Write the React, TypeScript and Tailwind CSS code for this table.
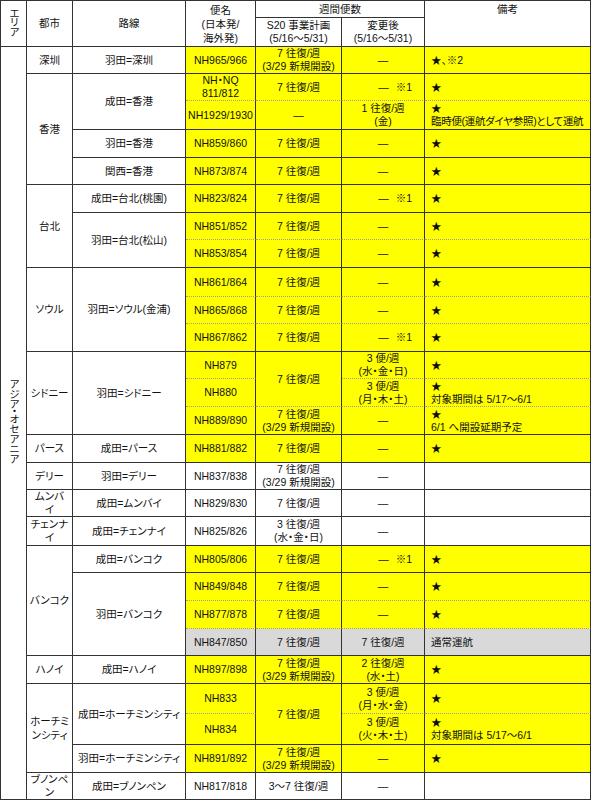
import React from 'react'
import clsx from 'clsx'

type Bg = 'y' | 'w' | 'g'

const bgClass: Record<Bg, string> = {
  y: 'bg-[#ffff00]',
  w: 'bg-white',
  g: 'bg-[#d9d9d9]',
}

type TdProps = {
  bg?: Bg
  dot?: boolean
  rs?: number
  cs?: number
  left?: boolean
  className?: string
  children?: React.ReactNode
}

function Td({ bg = 'w', dot = false, rs, cs, left = false, className, children }: TdProps) {
  return (
    <td
      rowSpan={rs}
      colSpan={cs}
      className={clsx(
        'border-r border-b border-r-[#333] p-0 align-middle',
        dot ? 'border-b-[#9c9c9c] [border-bottom-style:dotted]' : 'border-b-[#333]',
        left ? 'pl-[6px] text-left' : 'text-center',
        bgClass[bg],
        className,
      )}
    >
      {children}
    </td>
  )
}

function Two({ a, b }: { a: string; b: string }) {
  return (
    <div className="leading-[13px]">
      <div>{a}</div>
      <div>{b}</div>
    </div>
  )
}

function Dash() {
  return <span>—</span>
}

function DashNote() {
  return (
    <div className="flex justify-end gap-[7px] pr-[12px]">
      <span>—</span>
      <span>※1</span>
    </div>
  )
}

function Note({ a, b, className }: { a: string; b: string; className?: string }) {
  return (
    <div className={clsx('leading-[13px]', className)}>
      <div>{a}</div>
      <div>{b}</div>
    </div>
  )
}

const W7 = '7 往復/週'
const NEW = '(3/29 新規開設)'

export default function App() {
  return (
    <div className="h-[800px] w-[591px] overflow-hidden bg-white text-[#111]">
      <table className="w-[591px] table-fixed border-separate border-spacing-0 border-l border-t border-[#333] font-['Liberation_Sans','Noto_Sans_CJK_JP',sans-serif] text-[10.5px] leading-[13px] [font-feature-settings:'palt']">
        <colgroup>
          <col className="w-[26px]" />
          <col className="w-[46px]" />
          <col className="w-[113px]" />
          <col className="w-[70px]" />
          <col className="w-[86px]" />
          <col className="w-[83px]" />
          <col className="w-[166px]" />
        </colgroup>
        <thead>
          {/* Header */}
          <tr className="h-[17px]">
            <Td rs={2}>
              <div className="mx-auto inline-block [writing-mode:vertical-rl] [font-feature-settings:'vpal']">
                エリア
              </div>
            </Td>
            <Td rs={2}>都市</Td>
            <Td rs={2}>路線</Td>
            <Td rs={2}>
              <div className="leading-[14px]">
                <div>便名</div>
                <div>(日本発/</div>
                <div>海外発)</div>
              </div>
            </Td>
            <Td cs={2}>週間便数</Td>
            <Td rs={2} className="!align-top pt-[2px]">
              備考
            </Td>
          </tr>
          <tr className="h-[29px]">
            <Td>
              <Two a="S20 事業計画" b="(5/16〜5/31)" />
            </Td>
            <Td>
              <Two a="変更後" b="(5/16〜5/31)" />
            </Td>
          </tr>
        </thead>
        <tbody>
          <tr className="h-[27px]">
            <Td rs={27}>
              <div className="mx-auto inline-block [writing-mode:vertical-rl] [font-feature-settings:'vpal']">
                アジア・オセアニア
              </div>
            </Td>
            <Td>深圳</Td>
            <Td>羽田=深圳</Td>
            <Td bg="y">NH965/966</Td>
            <Td bg="y">
              <Two a={W7} b={NEW} />
            </Td>
            <Td bg="y">
              <Dash />
            </Td>
            <Td bg="y" left>
              ★、※2
            </Td>
          </tr>

          {/* 香港 */}
          <tr className="h-[27px]">
            <Td rs={4}>香港</Td>
            <Td rs={2}>成田=香港</Td>
            <Td bg="y" dot>
              <div className="leading-[13px]">
                <div>NH・NQ</div>
                <div>811/812</div>
              </div>
            </Td>
            <Td bg="y" dot>
              {W7}
            </Td>
            <Td bg="y" dot>
              <DashNote />
            </Td>
            <Td bg="y" dot left>
              ★
            </Td>
          </tr>
          <tr className="h-[29px]">
            <Td bg="y">NH1929/1930</Td>
            <Td bg="y">
              <Dash />
            </Td>
            <Td bg="y">
              <Two a="1 往復/週" b="(金)" />
            </Td>
            <Td bg="y" left>
              <Note a="★" b="臨時便(運航ダイヤ参照)として運航" className="tracking-[-0.3px]" />
            </Td>
          </tr>
          <tr className="h-[28px]">
            <Td>羽田=香港</Td>
            <Td bg="y">NH859/860</Td>
            <Td bg="y">{W7}</Td>
            <Td bg="y">
              <Dash />
            </Td>
            <Td bg="y" left>
              ★
            </Td>
          </tr>
          <tr className="h-[27px]">
            <Td>関西=香港</Td>
            <Td bg="y">NH873/874</Td>
            <Td bg="y">{W7}</Td>
            <Td bg="y">
              <Dash />
            </Td>
            <Td bg="y" left>
              ★
            </Td>
          </tr>

          {/* 台北 */}
          <tr className="h-[28px]">
            <Td rs={3}>台北</Td>
            <Td>成田=台北(桃園)</Td>
            <Td bg="y">NH823/824</Td>
            <Td bg="y">{W7}</Td>
            <Td bg="y">
              <DashNote />
            </Td>
            <Td bg="y" left>
              ★
            </Td>
          </tr>
          <tr className="h-[27px]">
            <Td rs={2}>羽田=台北(松山)</Td>
            <Td bg="y" dot>
              NH851/852
            </Td>
            <Td bg="y" dot>
              {W7}
            </Td>
            <Td bg="y" dot>
              <Dash />
            </Td>
            <Td bg="y" dot left>
              ★
            </Td>
          </tr>
          <tr className="h-[28px]">
            <Td bg="y">NH853/854</Td>
            <Td bg="y">{W7}</Td>
            <Td bg="y">
              <Dash />
            </Td>
            <Td bg="y" left>
              ★
            </Td>
          </tr>

          {/* ソウル */}
          <tr className="h-[29px]">
            <Td rs={3}>ソウル</Td>
            <Td rs={3}>羽田=ソウル(金浦)</Td>
            <Td bg="y" dot>
              NH861/864
            </Td>
            <Td bg="y" dot>
              {W7}
            </Td>
            <Td bg="y" dot>
              <Dash />
            </Td>
            <Td bg="y" dot left>
              ★
            </Td>
          </tr>
          <tr className="h-[27px]">
            <Td bg="y" dot>
              NH865/868
            </Td>
            <Td bg="y" dot>
              {W7}
            </Td>
            <Td bg="y" dot>
              <Dash />
            </Td>
            <Td bg="y" dot left>
              ★
            </Td>
          </tr>
          <tr className="h-[28px]">
            <Td bg="y">NH867/862</Td>
            <Td bg="y">{W7}</Td>
            <Td bg="y">
              <DashNote />
            </Td>
            <Td bg="y" left>
              ★
            </Td>
          </tr>

          {/* シドニー */}
          <tr className="h-[27px]">
            <Td rs={3}>シドニー</Td>
            <Td rs={3}>羽田=シドニー</Td>
            <Td bg="y" dot>
              NH879
            </Td>
            <Td bg="y" dot rs={2}>
              {W7}
            </Td>
            <Td bg="y" dot>
              <Two a="3 便/週" b="(水・金・日)" />
            </Td>
            <Td bg="y" dot left>
              ★
            </Td>
          </tr>
          <tr className="h-[28px]">
            <Td bg="y" dot>
              NH880
            </Td>
            <Td bg="y" dot>
              <Two a="3 便/週" b="(月・木・土)" />
            </Td>
            <Td bg="y" dot left>
              <Note a="★" b="対象期間は 5/17〜6/1" />
            </Td>
          </tr>
          <tr className="h-[28px]">
            <Td bg="y">NH889/890</Td>
            <Td bg="y">
              <Two a={W7} b={NEW} />
            </Td>
            <Td bg="y">
              <Dash />
            </Td>
            <Td bg="y" left>
              <Note a="★" b="6/1 へ開設延期予定" />
            </Td>
          </tr>

          {/* パース */}
          <tr className="h-[28px]">
            <Td>パース</Td>
            <Td>成田=パース</Td>
            <Td bg="y">NH881/882</Td>
            <Td bg="y">{W7}</Td>
            <Td bg="y">
              <Dash />
            </Td>
            <Td bg="y" left>
              ★
            </Td>
          </tr>

          {/* デリー / ムンバイ / チェンナイ */}
          <tr className="h-[27px]">
            <Td>デリー</Td>
            <Td>羽田=デリー</Td>
            <Td>NH837/838</Td>
            <Td>
              <Two a={W7} b={NEW} />
            </Td>
            <Td>
              <Dash />
            </Td>
            <Td left />
          </tr>
          <tr className="h-[27px]">
            <Td className="leading-[13px]">
              ムンバ
              <br />イ
            </Td>
            <Td>成田=ムンバイ</Td>
            <Td>NH829/830</Td>
            <Td>{W7}</Td>
            <Td>
              <Dash />
            </Td>
            <Td left />
          </tr>
          <tr className="h-[29px]">
            <Td className="leading-[13px]">
              チェンナ
              <br />イ
            </Td>
            <Td>成田=チェンナイ</Td>
            <Td>NH825/826</Td>
            <Td>
              <Two a="3 往復/週" b="(水・金・日)" />
            </Td>
            <Td>
              <Dash />
            </Td>
            <Td left />
          </tr>

          {/* バンコク */}
          <tr className="h-[27px]">
            <Td rs={4}>バンコク</Td>
            <Td>成田=バンコク</Td>
            <Td bg="y">NH805/806</Td>
            <Td bg="y">{W7}</Td>
            <Td bg="y">
              <DashNote />
            </Td>
            <Td bg="y" left>
              ★
            </Td>
          </tr>
          <tr className="h-[28px]">
            <Td rs={3}>羽田=バンコク</Td>
            <Td bg="y" dot>
              NH849/848
            </Td>
            <Td bg="y" dot>
              {W7}
            </Td>
            <Td bg="y" dot>
              <Dash />
            </Td>
            <Td bg="y" dot left>
              ★
            </Td>
          </tr>
          <tr className="h-[28px]">
            <Td bg="y" dot>
              NH877/878
            </Td>
            <Td bg="y" dot>
              {W7}
            </Td>
            <Td bg="y" dot>
              <Dash />
            </Td>
            <Td bg="y" dot left>
              ★
            </Td>
          </tr>
          <tr className="h-[27px]">
            <Td bg="g">NH847/850</Td>
            <Td bg="g">{W7}</Td>
            <Td bg="g">{W7}</Td>
            <Td bg="g" left>
              通常運航
            </Td>
          </tr>

          {/* ハノイ */}
          <tr className="h-[28px]">
            <Td>ハノイ</Td>
            <Td>成田=ハノイ</Td>
            <Td bg="y">NH897/898</Td>
            <Td bg="y">
              <Two a={W7} b={NEW} />
            </Td>
            <Td bg="y">
              <Two a="2 往復/週" b="(水・土)" />
            </Td>
            <Td bg="y" left>
              ★
            </Td>
          </tr>

          {/* ホーチミンシティ */}
          <tr className="h-[30px]">
            <Td rs={3} className="leading-[14px]">
              ホーチミ
              <br />
              ンシティ
            </Td>
            <Td rs={2}>成田=ホーチミンシティ</Td>
            <Td bg="y" dot>
              NH833
            </Td>
            <Td bg="y" rs={2}>
              {W7}
            </Td>
            <Td bg="y" dot>
              <Two a="3 便/週" b="(月・水・金)" />
            </Td>
            <Td bg="y" dot left>
              ★
            </Td>
          </tr>
          <tr className="h-[31px]">
            <Td bg="y">NH834</Td>
            <Td bg="y">
              <Two a="3 便/週" b="(火・木・土)" />
            </Td>
            <Td bg="y" left>
              <Note a="★" b="対象期間は 5/17〜6/1" />
            </Td>
          </tr>
          <tr className="h-[28px]">
            <Td>羽田=ホーチミンシティ</Td>
            <Td bg="y">NH891/892</Td>
            <Td bg="y">
              <Two a={W7} b={NEW} />
            </Td>
            <Td bg="y">
              <Dash />
            </Td>
            <Td bg="y" left>
              ★
            </Td>
          </tr>

          {/* ブノンペン */}
          <tr className="h-[26px]">
            <Td className="leading-[13px]">
              ブノンペ
              <br />ン
            </Td>
            <Td>成田=ブノンペン</Td>
            <Td>NH817/818</Td>
            <Td>3〜7 往復/週</Td>
            <Td>
              <Dash />
            </Td>
            <Td left />
          </tr>
        </tbody>
      </table>
    </div>
  )
}
